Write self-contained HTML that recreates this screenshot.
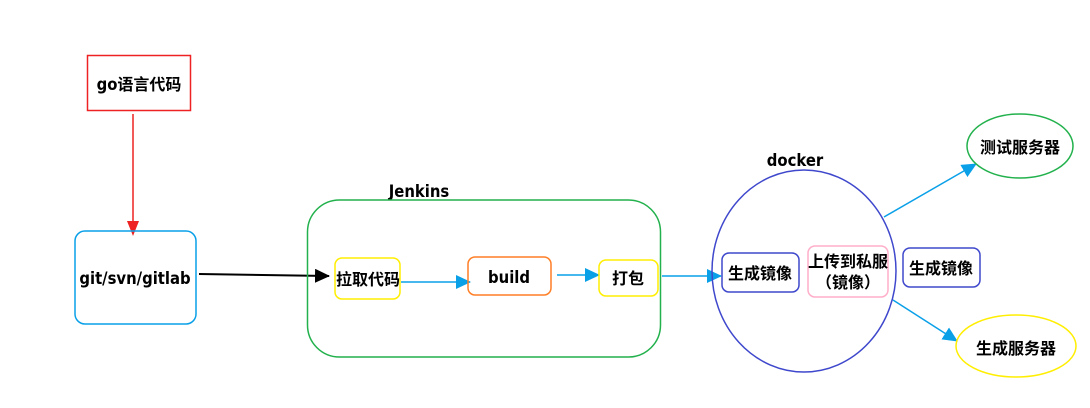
<!DOCTYPE html>
<html><head><meta charset="utf-8"><style>
html,body{margin:0;padding:0;background:#fff;width:1090px;height:408px;overflow:hidden}
text{font-family:"DejaVu Sans Condensed","DejaVu Sans","Noto Sans CJK SC",sans-serif;font-size:16.5px;font-weight:bold;fill:#000}
tspan.c,text.c{font-family:"Noto Sans CJK SC",sans-serif;font-size:16px;font-weight:bold}
</style></head><body>
<svg width="1090" height="408" xmlns="http://www.w3.org/2000/svg">
<defs>
<marker id="k" markerWidth="15" markerHeight="14" refX="14" refY="7" orient="auto" markerUnits="userSpaceOnUse"><path d="M0,0 L15,7 L0,14z" fill="#000"/></marker>
<marker id="b" markerWidth="15" markerHeight="14" refX="14" refY="7" orient="auto" markerUnits="userSpaceOnUse"><path d="M0,0 L15,7 L0,14z" fill="#0aa0e8"/></marker>
</defs>
<rect x="87.5" y="55.5" width="103" height="55" fill="none" stroke="#ee2222" stroke-width="1.5"/>
<text x="139" y="90" text-anchor="middle">go<tspan class="c">语言代码</tspan></text>
<line x1="133" y1="114" x2="133" y2="222" stroke="#ee2222" stroke-width="1.5"/>
<path d="M127,221 L139,221 L133,236z" fill="#ee2222"/>
<rect x="75" y="231" width="121" height="93" rx="10" fill="none" stroke="#0aa0e8" stroke-width="1.5"/>
<text x="135" y="284" text-anchor="middle">git/svn/gitlab</text>
<line x1="199" y1="274" x2="329" y2="276" stroke="#000" stroke-width="2" marker-end="url(#k)"/>
<text x="419" y="197" text-anchor="middle">Jenkins</text>
<rect x="307.5" y="200" width="353" height="157" rx="32" fill="none" stroke="#22b14c" stroke-width="1.5"/>
<rect x="335" y="258" width="65" height="41" rx="7" fill="none" stroke="#ffee00" stroke-width="1.5"/>
<text class="c" x="368" y="285" text-anchor="middle">拉取代码</text>
<line x1="401" y1="282" x2="470" y2="282" stroke="#0aa0e8" stroke-width="1.5" marker-end="url(#b)"/>
<rect x="468" y="257" width="83" height="38" rx="7" fill="none" stroke="#ff7f27" stroke-width="1.5"/>
<text x="509" y="283" text-anchor="middle">build</text>
<line x1="557" y1="275" x2="599" y2="275" stroke="#0aa0e8" stroke-width="1.5" marker-end="url(#b)"/>
<rect x="599" y="260" width="59" height="36" rx="7" fill="none" stroke="#ffee00" stroke-width="1.5"/>
<text class="c" x="628" y="284" text-anchor="middle">打包</text>
<line x1="662" y1="276" x2="721" y2="276" stroke="#0aa0e8" stroke-width="1.5" marker-end="url(#b)"/>
<text x="795" y="166" text-anchor="middle">docker</text>
<ellipse cx="804" cy="271" rx="92" ry="101" fill="none" stroke="#3f48cc" stroke-width="1.5"/>
<rect x="722" y="253" width="77" height="39" rx="7" fill="none" stroke="#3f48cc" stroke-width="1.5"/>
<text class="c" x="760" y="279" text-anchor="middle">生成镜像</text>
<rect x="808" y="246" width="80" height="51" rx="7" fill="none" stroke="#ffaec9" stroke-width="1.5"/>
<text class="c" x="848" y="267" text-anchor="middle">上传到私服</text>
<text class="c" x="848" y="288" text-anchor="middle">（镜像）</text>
<rect x="903" y="248" width="77" height="39" rx="7" fill="none" stroke="#3f48cc" stroke-width="1.5"/>
<text class="c" x="941" y="274" text-anchor="middle">生成镜像</text>
<line x1="884" y1="217" x2="976" y2="164" stroke="#0aa0e8" stroke-width="1.5" marker-end="url(#b)"/>
<ellipse cx="1020" cy="146" rx="53" ry="32" fill="none" stroke="#22b14c" stroke-width="1.5"/>
<text class="c" x="1020" y="153" text-anchor="middle">测试服务器</text>
<line x1="893" y1="300" x2="957" y2="341" stroke="#0aa0e8" stroke-width="1.5" marker-end="url(#b)"/>
<ellipse cx="1016" cy="346" rx="60" ry="31" fill="none" stroke="#ffee00" stroke-width="1.5"/>
<text class="c" x="1016" y="354" text-anchor="middle">生成服务器</text>
</svg>
</body></html>
